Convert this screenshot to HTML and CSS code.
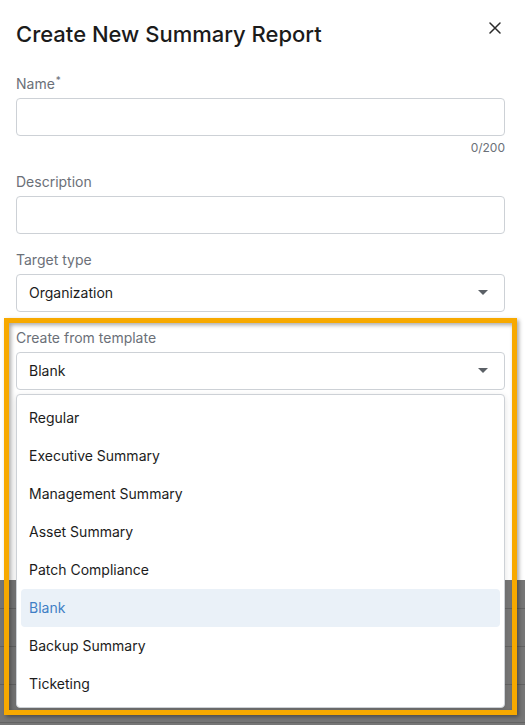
FILE: index.html
```html
<!DOCTYPE html>
<html lang="en">
  <head>
    <meta charset="UTF-8" />
    <title>Create New Summary Report</title>
    <link rel="stylesheet" href="styles.css">
  </head>
  <body>
    <div class="modal">
      <div class="modal-header">
        <h2>Create New Summary Report</h2>
        <button class="close-btn" aria-label="Close">
          <svg width="12" height="12" viewBox="0 0 12 12">
            <path d="M1 1 L11 11 M11 1 L1 11" stroke="#2a2a2a" stroke-width="1.5" stroke-linecap="round" />
          </svg>
        </button>
      </div>

      <div class="field">
        <label>Name<sup>*</sup></label>
        <input type="text" />
        <div class="counter">0/200</div>
      </div>

      <div class="field">
        <label>Description</label>
        <input type="text" />
      </div>

      <div class="field">
        <label>Target type</label>
        <div class="select">
          <span>Organization</span>
          <span class="caret"></span>
        </div>
      </div>

      <div class="field template-field">
        <label>Create from template</label>
        <div class="select">
          <span>Blank</span>
          <span class="caret"></span>
        </div>

        <!-- open dropdown list -->
        <ul class="menu">
          <li>Regular</li>
          <li>Executive Summary</li>
          <li>Management Summary</li>
          <li>Asset Summary</li>
          <li>Patch Compliance</li>
          <li class="selected">Blank</li>
          <li>Backup Summary</li>
          <li>Ticketing</li>
        </ul>
      </div>
    </div>

    <!-- rows of the page behind the dialog -->
    <div class="backdrop-rows">
      <div class="row"></div>
      <div class="row"></div>
      <div class="row"></div>
      <div class="row"></div>
    </div>

    <div class="highlight"></div>
  </body>
</html>
```

FILE: styles.css
```css
:root {
  --text: #1c1c1c;
  --label: #6b7078;
  --border: #cdd1d6;
  --accent: #3f7fc5;
  --accent-bg: #eaf1f8;
  --backdrop: #767676;
  --marker: #f7a900;
}

* {
  box-sizing: border-box;
}

body {
  margin: 0;
  font-family: "Inter", "Noto Sans", sans-serif;
  background: var(--backdrop);
  color: var(--text);
  position: relative;
  min-height: 725px;
  overflow: hidden;
}

.modal {
  background: white;
  height: 580px;
  padding: 20px 24px 0 16px;
}

.modal-header {
  display: flex;
  justify-content: space-between;
  align-items: flex-start;
  margin-bottom: 26px;
}

.modal-header h2 {
  margin: 0;
  font-size: 22px;
  line-height: 28px;
  font-weight: 500;
  color: #1b1b1b;
}

.close-btn {
  background: none;
  border: none;
  padding: 0;
  margin-top: 2px;
  width: 12px;
  height: 12px;
  display: flex;
  cursor: pointer;
}

.field {
  display: flex;
  flex-direction: column;
  margin-bottom: 16px;
  width: 489px;
}

.field label {
  font-size: 14px;
  line-height: 20px;
  color: var(--label);
  margin-bottom: 4px;
}

.field label sup {
  font-size: 10px;
  line-height: 0;
  vertical-align: 5px;
  margin-left: 1px;
}

input[type="text"] {
  height: 38px;
  border: 1px solid var(--border);
  border-radius: 4px;
  font-size: 14px;
  padding: 0 12px;
  font-family: inherit;
}

.counter {
  text-align: right;
  font-size: 12px;
  line-height: 16px;
  margin-top: 4px;
  color: var(--label);
}

.select {
  height: 38px;
  border: 1px solid var(--border);
  border-radius: 4px;
  display: flex;
  align-items: center;
  justify-content: space-between;
  padding: 0 16px 0 12px;
  font-size: 14px;
  line-height: 18px;
}

.caret {
  width: 0;
  height: 0;
  margin-top: -1px;
  border-left: 5px solid transparent;
  border-right: 5px solid transparent;
  border-top: 5px solid #5b6066;
}

.template-field {
  position: relative;
}

.menu {
  position: absolute;
  top: 66px;
  left: 0;
  width: 489px;
  margin: 0;
  padding: 4px;
  list-style: none;
  background: white;
  border: 1px solid var(--border);
  border-radius: 4px;
  box-shadow: 0 2px 6px rgba(0, 0, 0, 0.12);
  z-index: 2;
}

.menu li {
  height: 38px;
  line-height: 38px;
  padding: 0 8px;
  font-size: 14px;
  border-radius: 4px;
}

.menu li.selected {
  background: var(--accent-bg);
  color: var(--accent);
}

.backdrop-rows {
  padding-top: 28px;
}

.backdrop-rows .row {
  height: 38px;
  border-top: 1px solid #636363;
}

/* orange marker frame drawn over the template picker */
.highlight {
  position: absolute;
  left: 4px;
  top: 318px;
  width: 513px;
  height: 397px;
  border: 5px solid var(--marker);
  box-shadow: 2px 2px 4px rgba(0, 0, 0, 0.35),
    inset 2px 2px 4px rgba(0, 0, 0, 0.35);
  z-index: 3;
  pointer-events: none;
}
```
